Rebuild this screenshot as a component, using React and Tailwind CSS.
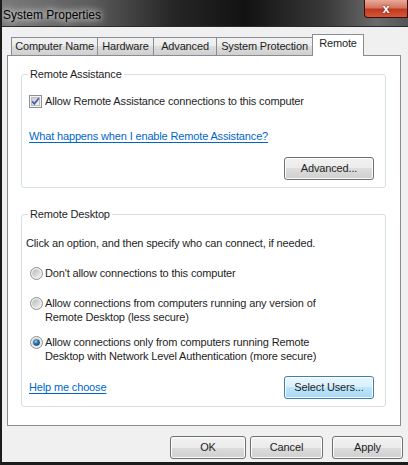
import React from "react"

const btn = "h-[23px] rounded-[3px] border border-[#707070] bg-[linear-gradient(to_bottom,#f2f2f2_0%,#ebebeb_50%,#dddddd_50%,#cfcfcf_100%)] shadow-[inset_0_0_0_1px_#fcfcfc] flex items-center justify-center"
const btnHot = "h-[23px] rounded-[3px] border border-[#3c7fb1] bg-[linear-gradient(to_bottom,#eaf6fd_0%,#d9f0fc_50%,#bee6fd_50%,#a7d9f5_100%)] shadow-[inset_0_0_0_1px_#fcfcfc] flex items-center justify-center"

const tabIdle = "h-[18px] whitespace-nowrap border-t border-l border-[#898c95] bg-[linear-gradient(to_bottom,#f2f2f2_0%,#ebebeb_50%,#dddddd_50%,#cfcfcf_100%)] pt-[1px] text-center leading-[15px]"

function CheckBox() {
  return (
    <svg width="13" height="13" viewBox="0 0 13 13" className="shrink-0">
      <defs>
        <linearGradient id="cbg" x1="0" y1="0" x2="1" y2="1">
          <stop offset="0" stopColor="#c5cad2" />
          <stop offset="1" stopColor="#f7f7f7" />
        </linearGradient>
      </defs>
      <rect x="0.5" y="0.5" width="12" height="12" fill="#f4f4f4" stroke="#8e8f8f" />
      <rect x="2.5" y="2.5" width="8" height="8" fill="url(#cbg)" stroke="#b9bec6" />
      <path d="M3.2 6.2 L5.3 8.8 L9.8 3.3" fill="none" stroke="#4a5f97" strokeWidth="1.7" />
    </svg>
  )
}

function Radio({ checked }) {
  return (
    <svg width="13" height="13" viewBox="0 0 13 13" className="shrink-0">
      <defs>
        <linearGradient id="rbg" x1="0" y1="0" x2="1" y2="1">
          <stop offset="0" stopColor="#b8b8b8" />
          <stop offset="1" stopColor="#f4f4f4" />
        </linearGradient>
        <radialGradient id="rdot" cx="0.4" cy="0.35" r="0.7">
          <stop offset="0" stopColor="#9fd8f5" />
          <stop offset="0.45" stopColor="#2c7ab4" />
          <stop offset="1" stopColor="#0c3a66" />
        </radialGradient>
      </defs>
      <circle cx="6.5" cy="6.5" r="6" fill="#f0f0f0" stroke="#8e8f8f" />
      <circle cx="6.5" cy="6.5" r="4.3" fill="url(#rbg)" />
      {checked && <circle cx="6.5" cy="6.5" r="3.3" fill="url(#rdot)" />}
    </svg>
  )
}

function Group({ title, className, children }) {
  return (
    <fieldset className={`border border-[#d5dfe5] rounded-[3px] pl-[7px] pr-[11px] pb-[7px] ${className}`}>
      <legend className="ml-[-1px] px-[2px] leading-[15px]">{title}</legend>
      {children}
    </fieldset>
  )
}

export default function App() {
  return (
    <div className="w-[408px] h-[465px] flex flex-col bg-[#f0f0f0] border-l-2 border-b-[3px] border-[#1c1c1c] font-['Liberation_Sans',Arial,sans-serif] text-[11px] tracking-[-0.15px] text-[#1e1e1e] overflow-hidden">
      {/* title bar */}
      <div className="h-[27px] shrink-0 flex justify-between bg-[linear-gradient(to_right,#7a7a7a_0%,#5c5c5c_22%,#262626_42%,#121212_60%,#3a3a3a_80%,#6a6a6a_92%,#555_100%)] border-b border-[#2a2a2a]">
        <span className="pl-[1px] pt-[6px] text-[12px] tracking-normal text-black [text-shadow:0_0_6px_#fff,0_0_10px_#ddd]">System Properties</span>
        <div className="w-[44px] h-[18px] rounded-bl-[4px] border border-t-0 border-[#3a0d06] bg-[linear-gradient(to_bottom,#e9a999_0%,#d47561_45%,#c2391d_55%,#d2583a_100%)] flex items-center justify-center text-white font-bold text-[13px] leading-none [text-shadow:0_0_2px_#5a1208]">
          x
        </div>
      </div>

      {/* body */}
      <div className="flex-1 flex flex-col pl-[5px] pr-[7px]">
        {/* tabs */}
        <div className="h-[28px] flex items-end pl-[4px]">
          <div className={`${tabIdle} w-[86px]`}>Computer Name</div>
          <div className={`${tabIdle} w-[56px]`}>Hardware</div>
          <div className={`${tabIdle} w-[63px]`}>Advanced</div>
          <div className={`${tabIdle} w-[96px]`}>System Protection</div>
          <div className="relative z-10 mb-[-1px] h-[22px] w-[52px] border-t border-x border-[#898c95] bg-white pt-[1px] text-center leading-[15px]">Remote</div>
        </div>

        {/* panel */}
        <div className="h-[371px] bg-white border border-[#898c95] pl-[13px] pr-[14px] flex flex-col">
          <Group title="Remote Assistance" className="mt-[11px]">
            <div className="mt-[12px] flex items-center gap-[3px] leading-[15px]">
              <CheckBox />
              <span>Allow Remote Assistance connections to this computer</span>
            </div>
            <div className="mt-[20px] leading-[15px]">
              <span className="text-[#0066cc] underline underline-offset-[2px]">What happens when I enable Remote Assistance?</span>
            </div>
            <div className="mt-[13px] flex justify-end">
              <div className={`${btn} w-[90px]`}>Advanced...</div>
            </div>
          </Group>

          <Group title="Remote Desktop" className="mt-[19px]">
            <div className="mt-[14px] ml-[-3px] leading-[15px]">Click an option, and then specify who can connect, if needed.</div>
            <div className="mt-[15px] ml-[1px] flex items-center gap-[2px] leading-[15px]">
              <Radio />
              <span>Don't allow connections to this computer</span>
            </div>
            <div className="mt-[15px] ml-[1px] flex items-start gap-[2px] leading-[14px]">
              <span className="pt-[1px]"><Radio /></span>
              <span>Allow connections from computers running any version of<br />Remote Desktop (less secure)</span>
            </div>
            <div className="mt-[11px] ml-[1px] flex items-start gap-[2px] leading-[14px]">
              <span className="pt-[1px]"><Radio checked /></span>
              <span>Allow connections only from computers running Remote<br />Desktop with Network Level Authentication (more secure)</span>
            </div>
            <div className="mt-[13px] flex items-center justify-between">
              <span className="text-[#0066cc] underline underline-offset-[2px] leading-[15px]">Help me choose</span>
              <div className={`${btnHot} w-[90px]`}>Select Users...</div>
            </div>
          </Group>
        </div>

        {/* dialog buttons */}
        <div className="mt-[10px] flex justify-end">
          <div className={`${btn} w-[76px]`}>OK</div>
          <div className={`${btn} w-[73px] ml-[4px]`}>Cancel</div>
          <div className={`${btn} w-[71px] ml-[9px] mr-[-2px]`}>Apply</div>
        </div>
      </div>
    </div>
  )
}
